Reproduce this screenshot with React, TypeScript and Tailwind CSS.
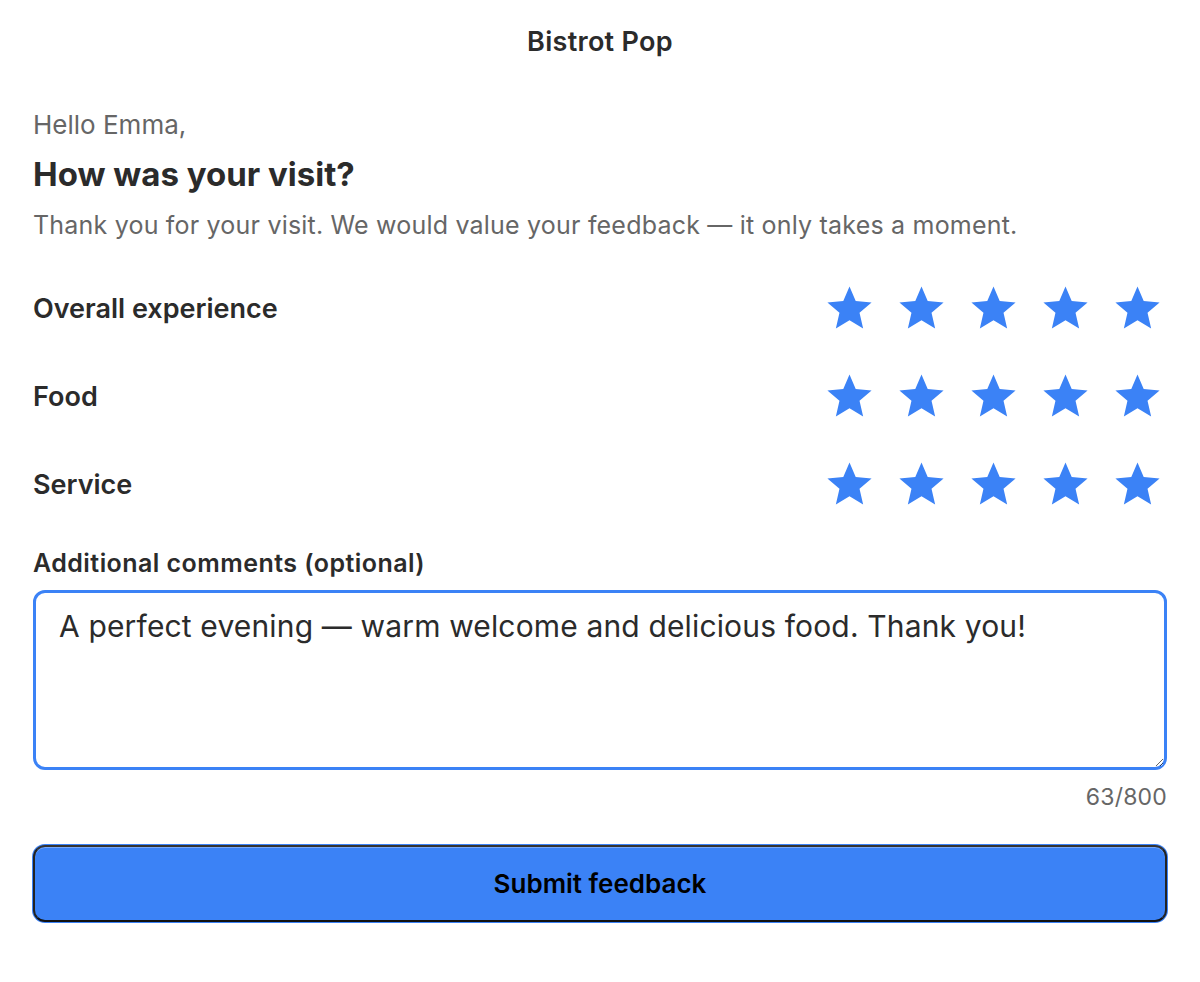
import React, { useState } from "react";

const categories = ["Overall experience", "Food", "Service"];

const StarIcon = () => (
  <svg viewBox="0 0 24 24" className="w-[53px] h-[53px]" fill="#3b82f6">
    <path d="M12 17.27L18.18 21l-1.64-7.03L22 9.24l-7.19-.61L12 2 9.19 8.63 2 9.24l5.46 4.73L5.82 21z" />
  </svg>
);

const App = () => {
  const [comment, setComment] = useState(
    "A perfect evening — warm welcome and delicious food. Thank you!"
  );

  return (
    <div className="w-[1200px] min-h-[982px] bg-white text-[#2b2b2b] font-['Inter',sans-serif]">
      <header className="h-[84px] flex items-center justify-center">
        <h1 className="text-[27px] leading-[34px] font-semibold tracking-[0.3px]">Bistrot Pop</h1>
      </header>

      <main className="px-[33px] flex flex-col">
        <p className="mt-[25px] text-[26px] leading-[32px] text-[#666]">Hello Emma,</p>
        <h2 className="mt-[14px] text-[33px] leading-[38px] font-bold">How was your visit?</h2>
        <p className="mt-[17px] text-[25px] leading-[30px] text-[#666] tracking-[0.2px]">
          Thank you for your visit. We would value your feedback — it only takes a moment.
        </p>

        <div className="mt-[25px] flex flex-col">
          {categories.map((c) => (
            <div key={c} className="h-[88px] flex items-center justify-between">
              <span className="text-[27px] font-semibold">{c}</span>
              <div className="flex gap-[12px] -mt-[2px]">
                {[1, 2, 3, 4, 5].map((n) => (
                  <button key={n} className="w-[60px] h-[60px] flex items-center justify-center">
                    <StarIcon />
                  </button>
                ))}
              </div>
            </div>
          ))}
        </div>

        <label className="mt-[19px] text-[25px] leading-[30px] font-semibold tracking-[0.45px]">
          Additional comments (optional)
        </label>
        <textarea
          value={comment}
          onChange={(e) => setComment(e.target.value)}
          className="mt-[12px] h-[180px] w-full border-[3px] border-[#3b82f6] rounded-[12px] px-[23px] py-[15px] text-[30px] leading-[36px] tracking-[0.15px] text-[#2b2b2b] outline-none resize-y"
        />
        <p className="mt-[13px] text-right text-[23px] leading-[28px] text-[#666] tracking-[0.2px]">
          {comment.length}/800
        </p>

        <button className="mt-[34px] h-[77px] w-full rounded-[12px] bg-[#3b82f6] border-2 border-t-[#333] border-x-[#222] border-b-[#111] ring-1 ring-[#3b82f6] shadow-[inset_0_1px_0_rgba(255,255,255,0.3)] text-[26px] font-semibold text-black">
          Submit feedback
        </button>
      </main>
    </div>
  );
};

export default App;
